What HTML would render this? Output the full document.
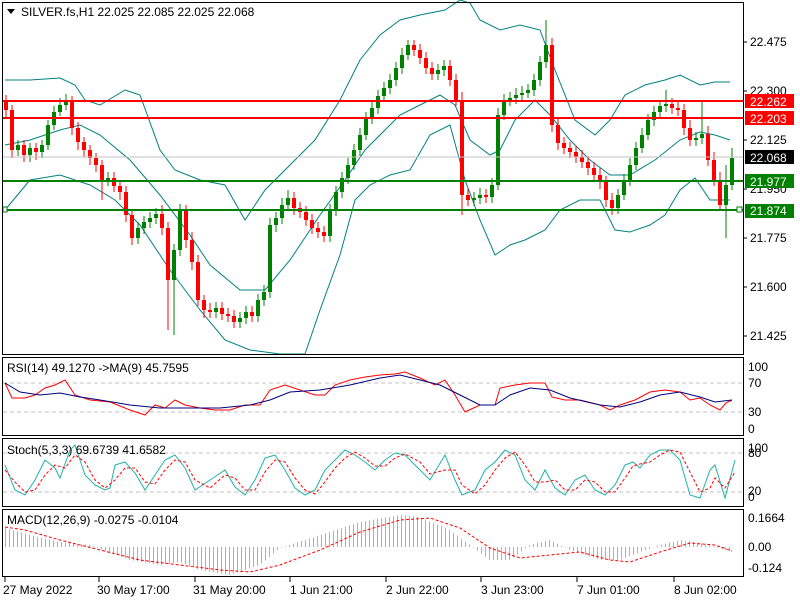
<!DOCTYPE html>
<html><head><meta charset="utf-8"><style>
html,body{margin:0;padding:0;background:#fff;width:800px;height:600px;overflow:hidden}
svg{display:block;font-family:"Liberation Sans",sans-serif;font-size:12px}
</style></head><body>
<svg width="800" height="600" xmlns="http://www.w3.org/2000/svg">
<defs>
<pattern id="vl" width="4" height="10" patternUnits="userSpaceOnUse"><rect x="1" y="0" width="1" height="10" fill="#b0b0b0"/></pattern>
</defs>
<rect width="800" height="600" fill="#fff"/>
<!-- bands -->
<g fill="none" stroke="#008080">
<polyline points="5,80 30,80 60,78 75,85 85,100 100,105 125,90 140,95 160,150 175,170 200,180 225,185 245,220 265,190 290,165 315,140 340,100 360,60 380,35 400,20 420,15 445,10 460,0 470,3 480,20 500,30 520,25 540,30 555,70 575,120 595,135 610,120 625,95 645,85 665,80 680,75 700,85 715,82 730,82"/>
<polyline points="5,145 30,140 60,130 80,125 100,135 130,160 160,195 190,235 210,265 240,290 265,290 290,260 320,215 345,180 365,150 385,130 400,115 420,105 440,95 455,105 470,140 490,155 500,150 515,120 535,100 550,115 570,140 590,160 610,175 630,175 655,160 680,140 700,132 715,135 730,140"/>
<polyline points="5,210 30,180 60,175 90,185 115,200 140,225 170,270 200,310 225,340 250,350 280,354 305,354 320,310 340,255 355,200 370,185 390,175 410,170 430,135 450,125 465,180 480,220 495,255 510,245 525,240 545,230 560,210 580,200 600,200 615,230 630,232 650,225 665,215 680,190 695,178 710,200 730,200"/>
</g>
<!-- candles -->
<path fill="none" stroke="#f00" stroke-width="1" d="M6 95V117M12 105V158M24 140V162M36 143V160M72 96V135M78 122V150M84 137V157M90 145V165M96 153V172M102 160V200M114 172V192M120 180V200M126 186V222M132 210V245M162 205V235M168 222V330M186 205V248M192 232V270M198 255V306M204 295V318M210 303V318M222 302V320M228 308V322M234 310V328M252 306V322M294 192V215M300 202V218M306 206V226M312 214V234M318 222V238M324 226V242M414 40V56M420 44V64M426 52V74M432 62V80M450 60V86M456 74V106M462 92V215M468 188V206M486 189V203M552 38V132M558 118V150M564 137V154M570 142V158M576 146V163M582 150V168M588 156V175M594 162V181M600 168V189M606 176V207M612 193V215M672 98V114M678 100V116M684 104V135M690 120V146M708 126V166M714 152V186M720 172V210"/>
<path fill="none" stroke="#f00" stroke-width="4" d="M6 100V110M12 110V150M24 145V155M36 148V152M72 102V128M78 128V142M84 142V150M90 150V158M96 158V165M102 165V180M114 178V186M120 186V192M126 192V215M132 215V238M162 214V228M168 228V280M186 210V240M192 240V262M198 262V300M204 300V310M210 310V312M222 308V314M228 314V316M234 316V322M252 312V316M294 198V208M300 208V212M306 212V220M312 220V228M318 228V232M324 232V236M414 45V50M420 50V58M426 58V68M432 68V74M450 66V80M456 80V100M462 100V195M468 195V200M486 195V197M552 45V125M558 125V143M564 143V148M570 148V152M576 152V157M582 157V162M588 162V168M594 168V175M600 175V182M606 182V200M612 200V208M672 104V108M678 108V110M684 110V128M690 128V140M708 134V160M714 160V180M720 180V205"/>
<path fill="none" stroke="#008000" stroke-width="1" d="M18 140V156M30 143V162M42 140V158M48 120V150M54 106V130M60 98V116M66 94V110M108 172V186M138 222V244M144 216V234M150 212V228M156 208V224M174 244V335M180 204V256M216 302V318M240 312V328M246 306V324M258 294V322M264 285V306M270 218V298M276 212V232M282 198V224M288 190V210M330 204V242M336 186V216M342 172V198M348 158V184M354 144V170M360 128V156M366 112V140M372 102V124M378 90V114M384 82V102M390 74V94M396 62V86M402 48V74M408 40V60M438 64V80M444 60V76M474 192V206M480 188V204M492 178V203M498 108V190M504 94V120M510 92V106M516 88V104M522 86V100M528 84V98M534 74V96M540 56V86M546 20V68M618 189V214M624 174V200M630 158V186M636 142V170M642 128V153M648 114V140M654 106V126M660 100V118M666 90V112M696 132V146M702 100V144M726 165V238M732 148V190"/>
<path fill="none" stroke="#008000" stroke-width="4" d="M18 145V150M30 148V155M42 145V152M48 125V145M54 112V125M60 105V112M66 102V105M108 178V180M138 228V238M144 222V228M150 218V222M156 214V218M174 250V280M180 210V250M216 308V312M240 318V322M246 312V318M258 300V316M264 292V300M270 225V292M276 218V225M282 205V218M288 198V205M330 210V236M336 192V210M342 178V192M348 165V178M354 150V165M360 135V150M366 118V135M372 108V118M378 96V108M384 88V96M390 80V88M396 68V80M402 55V68M408 45V55M438 70V74M444 66V70M474 198V200M480 195V198M492 185V197M498 115V185M504 100V115M510 98V100M516 95V98M522 93V95M528 90V93M534 80V90M540 62V80M546 45V62M618 195V208M624 180V195M630 165V180M636 148V165M642 135V148M648 120V135M654 112V120M660 106V112M666 104V106M696 138V140M702 134V138M726 185V205M732 158V185"/>
<!-- levels -->
<line x1="3" y1="157" x2="743" y2="157" stroke="#c0c0c0"/>
<line x1="3" y1="101" x2="743" y2="101" stroke="#f00" stroke-width="2"/>
<line x1="3" y1="118" x2="743" y2="118" stroke="#f00" stroke-width="2"/>
<line x1="3" y1="181" x2="743" y2="181" stroke="#008000" stroke-width="2"/>
<line x1="3" y1="210" x2="743" y2="210" stroke="#008000" stroke-width="2"/>
<rect x="737" y="207" width="5" height="5" fill="#fff" stroke="#008000"/>
<rect x="3" y="207" width="4" height="5" fill="#fff" stroke="#008000"/>
<!-- grid dashed -->
<g stroke="#c0c0c0" stroke-dasharray="4,3">
<line x1="3" y1="383" x2="743" y2="383"/><line x1="3" y1="412" x2="743" y2="412"/>
<line x1="3" y1="453" x2="743" y2="453"/><line x1="3" y1="492" x2="743" y2="492"/>
</g>
<!-- RSI -->
<polyline fill="none" stroke="#f00" points="5,383 12,398 25,398 35,395 45,388 55,385 65,380 75,395 90,400 110,402 130,410 145,415 155,405 165,408 175,400 185,405 200,408 215,410 230,410 245,405 260,405 270,390 285,385 300,390 315,395 325,395 335,385 350,380 365,377 380,375 395,374 405,372 420,378 435,385 445,380 455,395 465,412 480,405 495,405 500,388 515,385 530,383 545,383 552,397 565,400 580,400 600,405 610,410 620,405 635,400 650,392 665,390 680,392 690,400 700,398 710,405 720,410 726,403 732,400"/>
<polyline fill="none" stroke="#000080" points="5,383 20,392 40,395 60,393 80,397 100,400 130,405 160,408 190,408 220,408 250,405 270,400 290,392 320,390 350,385 380,378 400,375 420,380 440,385 460,395 480,405 495,405 510,395 530,388 550,390 570,398 600,405 620,407 640,402 660,395 680,392 700,397 715,402 732,400"/>
<!-- Stoch -->
<polyline fill="none" stroke="#20b2aa" points="5,465 15,490 25,495 35,480 45,460 55,468 60,478 70,450 75,445 85,475 95,485 105,490 110,488 115,465 125,462 135,473 145,490 155,475 165,460 175,455 185,468 195,490 210,480 225,470 235,487 245,495 255,480 265,458 275,455 285,470 295,488 305,495 315,490 325,470 335,460 345,450 355,455 365,462 375,470 385,460 395,453 405,455 420,470 430,480 445,455 455,480 462,495 475,490 485,470 495,462 505,450 515,455 525,480 535,490 545,470 555,488 565,495 575,480 585,475 595,490 605,495 615,485 625,465 633,462 640,468 650,455 660,450 670,450 680,460 690,495 700,498 710,470 715,465 725,498 735,460"/>
<polyline fill="none" stroke="#f00" stroke-dasharray="3,2" points="5,470 15,482 25,492 35,490 45,475 55,465 65,468 75,455 85,462 95,480 105,488 115,480 125,468 135,468 145,482 155,484 165,470 175,460 185,462 195,480 210,488 225,475 235,478 245,490 255,490 265,472 275,460 285,462 295,478 305,490 315,494 325,482 335,468 345,458 355,452 365,458 375,466 385,466 395,458 405,454 420,462 430,474 445,470 455,470 462,485 475,494 485,485 495,470 505,458 515,452 525,465 535,482 545,482 555,480 565,490 575,490 585,480 595,482 605,492 615,492 625,478 633,466 640,464 650,462 660,455 670,450 680,452 690,472 700,492 710,488 715,478 725,488 735,472"/>
<!-- MACD -->
<polygon fill="url(#vl)" points="5,547 5,528 30,535 60,542 90,545 130,560 160,565 180,562 200,570 230,575 260,565 280,548 320,535 360,522 400,515 420,517 450,530 470,545 490,560 510,560 530,545 550,540 570,550 600,560 620,560 640,552 660,545 680,540 700,543 720,548 732,552 732,547"/>
<polyline fill="none" stroke="#f00" stroke-dasharray="3,2" points="5,527 25,530 60,540 100,550 140,560 180,565 220,570 250,572 280,565 320,550 360,532 400,520 430,518 460,528 490,548 520,558 550,555 580,552 610,560 630,562 660,552 690,543 715,545 732,551"/>
<!-- frames -->
<g fill="none" stroke="#000">
<rect x="2.5" y="2.5" width="741" height="352"/>
<rect x="2.5" y="357.5" width="741" height="78"/>
<rect x="2.5" y="438.5" width="741" height="68"/>
<rect x="2.5" y="509.5" width="741" height="67"/>
</g>
<rect x="0" y="0" width="2" height="600" fill="#fff"/>
<g stroke="#000">
<line x1="743" y1="42" x2="747" y2="42"/><line x1="743" y1="91" x2="747" y2="91"/><line x1="743" y1="140" x2="747" y2="140"/><line x1="743" y1="189" x2="747" y2="189"/><line x1="743" y1="238" x2="747" y2="238"/><line x1="743" y1="287" x2="747" y2="287"/><line x1="743" y1="336" x2="747" y2="336"/>
<line x1="5" y1="577" x2="5" y2="582"/><line x1="99" y1="577" x2="99" y2="582"/><line x1="195" y1="577" x2="195" y2="582"/><line x1="290" y1="577" x2="290" y2="582"/><line x1="386" y1="577" x2="386" y2="582"/><line x1="481" y1="577" x2="481" y2="582"/><line x1="577" y1="577" x2="577" y2="582"/><line x1="674" y1="577" x2="674" y2="582"/>
</g>
<g fill="#000">
<text x="750" y="46">22.475</text><text x="750" y="95">22.300</text><text x="750" y="144">22.125</text><text x="750" y="193">21.950</text><text x="750" y="242">21.775</text><text x="750" y="291">21.600</text><text x="750" y="340">21.425</text>
</g>
<rect x="745" y="94" width="49" height="14" fill="#f00"/><text x="750" y="106" fill="#fff">22.262</text>
<rect x="745" y="111" width="49" height="14" fill="#f00"/><text x="750" y="123" fill="#fff">22.203</text>
<rect x="745" y="150" width="49" height="14" fill="#000"/><text x="750" y="162" fill="#fff">22.068</text>
<rect x="745" y="174" width="49" height="14" fill="#008000"/><text x="750" y="186" fill="#fff">21.977</text>
<rect x="745" y="204" width="49" height="14" fill="#008000"/><text x="750" y="215" fill="#fff">21.874</text>
<g fill="#000">
<text x="748" y="371">100</text><text x="748" y="387">70</text><text x="748" y="416">30</text><text x="748" y="433">0</text>
<text x="748" y="452">100</text><text x="748" y="457">80</text><text x="748" y="495">20</text><text x="748" y="501">0</text>
<text x="748" y="522">0.1664</text><text x="748" y="551">0.00</text><text x="748" y="572">-0.124</text>
<text x="3" y="594">27 May 2022</text><text x="97" y="594">30 May 17:00</text><text x="193" y="594">31 May 20:00</text><text x="290" y="594">1 Jun 21:00</text><text x="386" y="594">2 Jun 22:00</text><text x="481" y="594">3 Jun 23:00</text><text x="577" y="594">7 Jun 01:00</text><text x="674" y="594">8 Jun 02:00</text>
<path d="M7 9 L15 9 L11 14 Z"/>
<text x="21" y="16">SILVER.fs,H1  22.025 22.085 22.025 22.068</text>
<text x="7" y="372">RSI(14) 49.1270  -&gt;MA(9) 45.7595</text>
<text x="7" y="454">Stoch(5,3,3) 69.6739 41.6582</text>
<text x="7" y="524">MACD(12,26,9) -0.0275 -0.0104</text>
</g>
</svg>
</body></html>
